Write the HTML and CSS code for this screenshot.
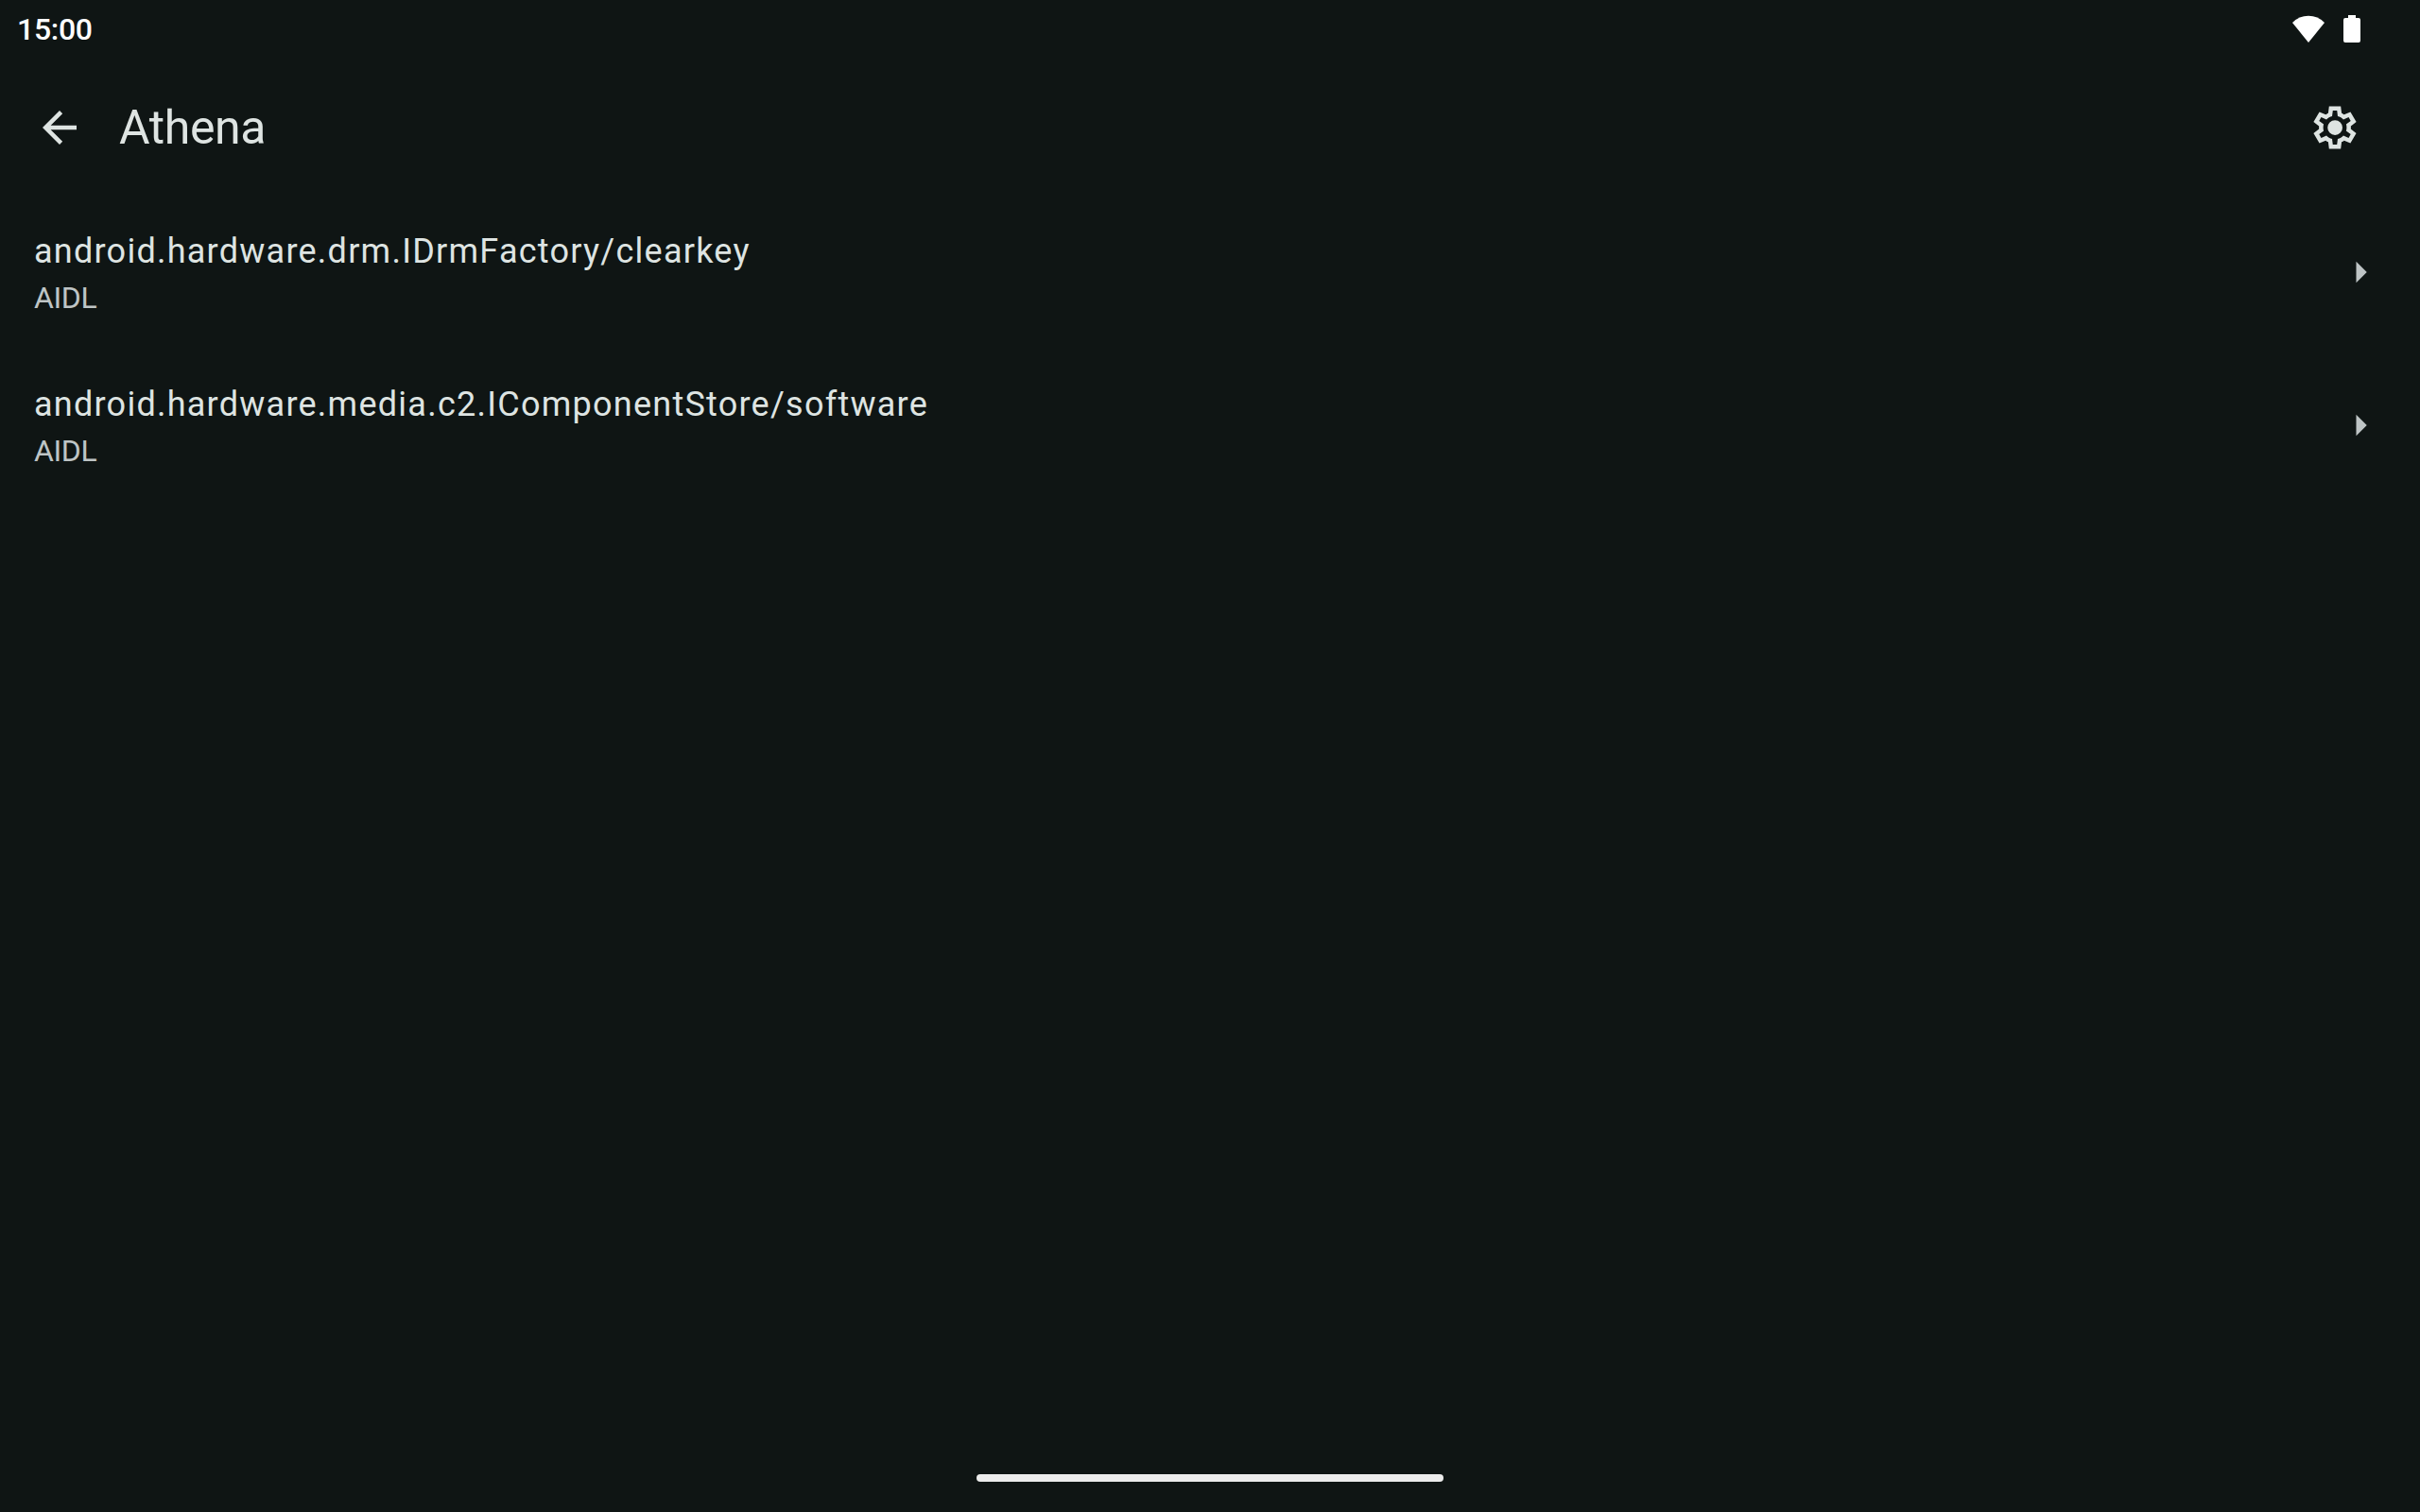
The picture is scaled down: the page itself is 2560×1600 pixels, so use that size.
FILE: index.html
```html
<!DOCTYPE html>
<html lang="en">
<head>
<meta charset="utf-8">
<title>Athena</title>
<link rel="stylesheet" href="styles.css">
</head>
<body>
<div class="status-bar">
  <span class="clock">15:00</span>
  <div class="status-icons">
    <svg class="wifi" viewBox="0 0 34 29"><path d="M17 29 0 8Q7 .8 17 .8T34 8Z"/></svg>
    <svg class="battery" viewBox="0 0 18 29"><path d="M5 0h8v3h3a2 2 0 0 1 2 2v22a2 2 0 0 1-2 2H2a2 2 0 0 1-2-2V5a2 2 0 0 1 2-2h3z"/></svg>
  </div>
</div>
<header class="app-bar">
  <svg class="icon" viewBox="0 0 24 24"><path d="M20 11H7.83l5.59-5.59L12 4l-8 8 8 8 1.41-1.41L7.83 13H20v-2z"/></svg>
  <h1 class="title">Athena</h1>
  <svg class="icon" viewBox="0 -960 960 960"><path d="m370-80-16-128q-13-5-24.500-12T307-235l-119 50L78-375l103-78q-1-7-1-13.500v-27q0-6.500 1-13.500L78-585l110-190 119 50q11-8 23-15t24-12l16-128h220l16 128q13 5 24.500 12t22.500 15l119-50 110 190-103 78q1 7 1 13.500v27q0 6.500-2 13.500l103 78-110 190-118-50q-11 8-23 15t-24 12L590-80H370Zm70-80h79l14-106q31-8 57.500-23.500T639-327l99 41 39-68-86-65q5-14 7-29.500t2-31.500q0-16-2-31.500t-7-29.500l86-65-39-68-99 42q-22-23-48.500-38.500T533-694l-13-106h-79l-14 106q-31 8-57.500 23.500T321-633l-99-41-39 68 86 64q-5 15-7 30t-2 32q0 16 2 31t7 30l-86 65 39 68 99-42q22 23 48.500 38.500T427-266l13 106Zm42-180q58 0 99-41t41-99q0-58-41-99t-99-41q-59 0-99.500 41T342-480q0 58 40.500 99t99.500 41Z"/></svg>
</header>
<main class="list">
  <div class="row">
    <div class="row-text">
      <div class="name">android.hardware.drm.IDrmFactory/clearkey</div>
      <div class="kind">AIDL</div>
    </div>
    <svg class="chevron" viewBox="0 0 24 24"><path d="m10 17 5-5-5-5z"/></svg>
  </div>
  <div class="row">
    <div class="row-text">
      <div class="name">android.hardware.media.c2.IComponentStore/software</div>
      <div class="kind">AIDL</div>
    </div>
    <svg class="chevron" viewBox="0 0 24 24"><path d="m10 17 5-5-5-5z"/></svg>
  </div>
</main>
<footer class="nav-bar"><div class="handle"></div></footer>
</body>
</html>
```
FILE: styles.css
```css
* {
  box-sizing: border-box;
}

body {
  margin: 0;
  height: 1600px;
  display: flex;
  flex-direction: column;
  background: #0f1514;
  color: #dee4e2;
  font-family: Roboto, "Liberation Sans", sans-serif;
}

svg {
  display: block;
  flex: none;
  fill: currentColor;
}

.status-bar {
  height: 63px;
  padding: 0 63px 0 18px;
  display: flex;
  justify-content: space-between;
  color: #fff;
}

.clock {
  font-size: 32px;
  font-weight: 500;
  line-height: 62px;
  letter-spacing: -0.3px;
}

.status-icons {
  display: flex;
  gap: 20px;
  padding-top: 16px;
}

.wifi {
  width: 34px;
  height: 29px;
}

.battery {
  width: 18px;
  height: 29px;
}

.app-bar {
  height: 144px;
  padding: 0 63px 0 36px;
  display: flex;
  align-items: center;
}

.icon {
  width: 54px;
  height: 54px;
}

.title {
  flex: 1;
  margin: 0 0 0 36px;
  font-size: 50px;
  font-weight: 400;
  line-height: 64px;
  letter-spacing: -0.4px;
}

.list {
  flex: 1;
}

.row {
  height: 162px;
  padding: 0 36.25px 0 36px;
  display: flex;
  align-items: center;
  justify-content: space-between;
}

.name {
  font-size: 36px;
  line-height: 54px;
  letter-spacing: 1.25px;
}

.kind {
  font-size: 32px;
  line-height: 45px;
  letter-spacing: -0.4px;
  color: #bec4c5;
}

.chevron {
  width: 54px;
  height: 54px;
  color: #bec4c5;
}

.nav-bar {
  height: 40px;
  display: flex;
  justify-content: center;
}

.handle {
  width: 494px;
  height: 8px;
  border-radius: 4px;
  background: #ececec;
}
```
